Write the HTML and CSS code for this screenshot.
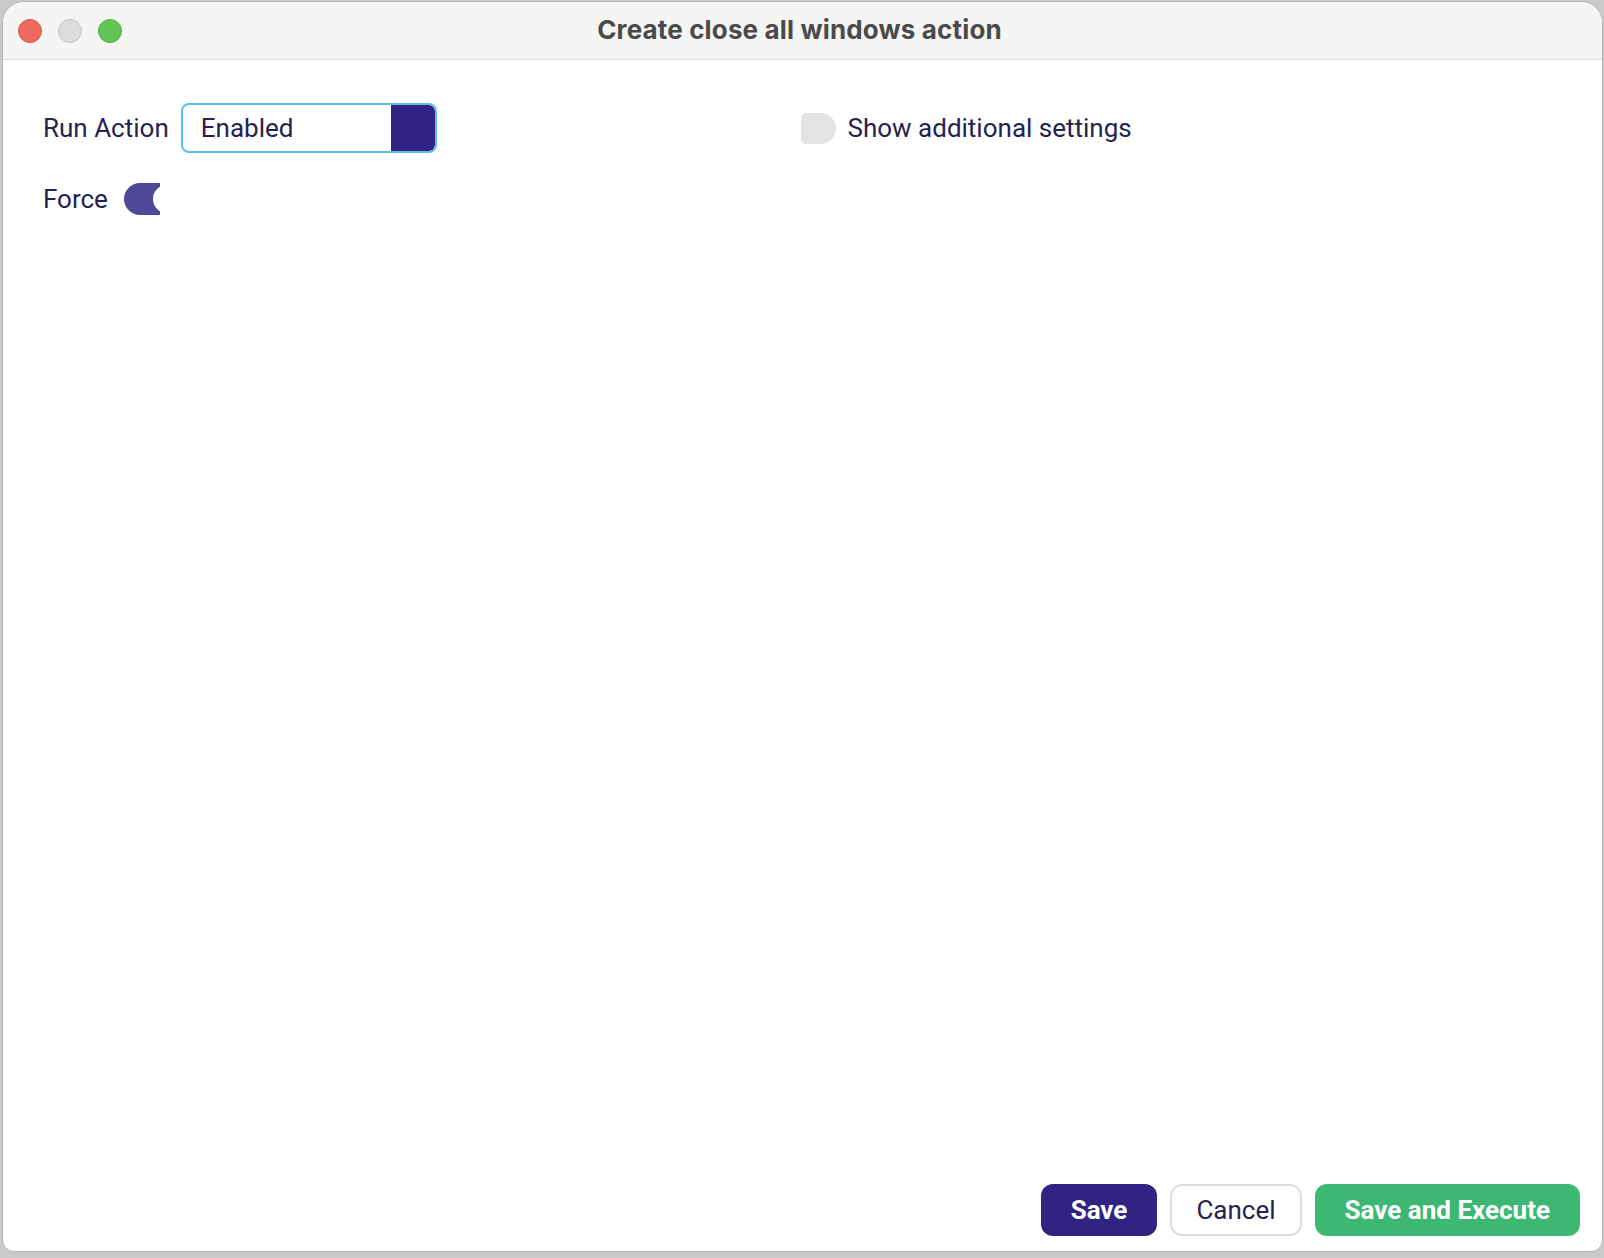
FILE: index.html
```html
<!DOCTYPE html>
<html lang="en">

<head>
    <meta charset="UTF-8">
    <meta name="viewport" content="width=device-width, initial-scale=1.0">
    <title>Create close all windows action</title>
    <link rel="stylesheet" href="styles.css">
</head>

<body>
    <div class="window">
        <div class="titlebar">
            <div class="lights">
                <span class="light close"></span>
                <span class="light minimize"></span>
                <span class="light zoom"></span>
            </div>
            <div class="title">Create close all windows action</div>
            <div></div>
        </div>

        <div class="content">
            <div class="column">
                <div class="field">
                    <span class="label">Run Action</span>
                    <div class="select">
                        <span class="select-value">Enabled</span>
                        <span class="select-button"></span>
                    </div>
                </div>
                <div class="field force">
                    <span class="label">Force</span>
                    <div class="switch-clip">
                        <div class="switch on">
                            <span class="knob"></span>
                        </div>
                    </div>
                </div>
            </div>
            <div class="column">
                <div class="field extra">
                    <span class="switch-off"></span>
                    <span class="label">Show additional settings</span>
                </div>
            </div>
        </div>

        <div class="footer">
            <button class="btn btn-save">Save</button>
            <button class="btn btn-cancel">Cancel</button>
            <button class="btn btn-execute">Save and Execute</button>
        </div>
    </div>
</body>

</html>
```

FILE: styles.css
```css
body {
    margin: 0;
    background-color: #c9c9c9;
    font-family: Roboto, "Noto Sans", sans-serif;
    color: #25224f;
}

.window {
    margin: 1px 1px 0 2px;
    height: 1251px;
    box-sizing: border-box;
    border: 1px solid #b3b3b3;
    border-radius: 22px 22px 12px 12px;
    background-color: #fff;
    overflow: hidden;
    display: flex;
    flex-direction: column;
}

.titlebar {
    height: 57px;
    flex-shrink: 0;
    background-color: #f5f5f4;
    border-bottom: 1px solid #dbdbdb;
    display: grid;
    grid-template-columns: 1fr auto 1fr;
    align-items: center;
}

.lights {
    display: flex;
    gap: 16px;
    padding-left: 15px;
}

.light {
    width: 24px;
    height: 24px;
    box-sizing: border-box;
    border-radius: 50%;
    border: 1px solid;
}

.close {
    background-color: #ee6a5f;
    border-color: #d6544a;
}

.minimize {
    background-color: #dcdcdb;
    border-color: #c2c2c2;
}

.zoom {
    background-color: #61c554;
    border-color: #4eab43;
}

.title {
    font-family: Inter, "Liberation Sans", sans-serif;
    font-weight: 700;
    font-size: 26px;
    letter-spacing: 0.15px;
    color: #4a4a4a;
    margin-bottom: 3px;
    margin-right: 6px;
}

.content {
    display: grid;
    grid-template-columns: 1fr 1fr;
    padding: 43px 40px 0;
}

.column {
    display: flex;
    flex-direction: column;
}

.field {
    display: flex;
    align-items: center;
}

.label {
    font-size: 26px;
}

.select {
    margin-left: 12px;
    width: 256px;
    height: 50px;
    box-sizing: border-box;
    border: 2px solid #5bc3ea;
    border-radius: 8px;
    display: flex;
    overflow: hidden;
}

.select-value {
    flex: 1;
    display: flex;
    align-items: center;
    padding-left: 18px;
    font-size: 26px;
}

.select-button {
    width: 44px;
    background-color: #312381;
    border-radius: 0 6px 6px 0;
}

.force {
    margin-top: 30px;
}

.switch-clip {
    margin-left: 16px;
    width: 36px;
    height: 32px;
    overflow: hidden;
}

.switch {
    width: 64px;
    height: 32px;
    border-radius: 16px;
    display: flex;
    align-items: center;
    padding-left: 29px;
    box-sizing: border-box;
}

.switch.on {
    background-color: #4f4798;
}

.knob {
    width: 28px;
    height: 28px;
    border-radius: 50%;
    background-color: #fff;
}

.extra {
    height: 50px;
    margin-left: -2px;
}

.switch-off {
    width: 35px;
    height: 31px;
    background-color: #e3e3e3;
    border-radius: 5px 16px 16px 5px;
    margin-right: 12px;
}

.footer {
    margin-top: auto;
    display: flex;
    justify-content: flex-end;
    gap: 13px;
    padding: 0 22px 15px;
}

.btn {
    height: 52px;
    border-radius: 12px;
    border: none;
    font-family: Roboto, "Noto Sans", sans-serif;
    font-size: 26px;
    padding: 0 30px;
    cursor: pointer;
}

.btn-save {
    background-color: #312381;
    color: #fff;
    font-weight: 700;
}

.btn-cancel {
    background-color: #fff;
    border: 2px solid #dedede;
    color: #25224f;
    padding: 0 24px;
}

.btn-execute {
    background-color: #3cb874;
    color: #fff;
    font-weight: 700;
}
```
